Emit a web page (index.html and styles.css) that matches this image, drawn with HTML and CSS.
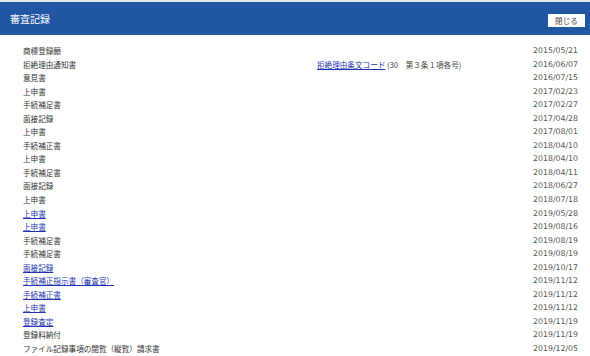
FILE: index.html
```html
<!DOCTYPE html>
<html lang="ja">
<head>
<meta charset="utf-8">
<title>審査記録</title>
<link rel="stylesheet" href="styles.css">
</head>
<body>
<div class="page">
  <header class="bar">
    <h1 class="title">審査記録</h1>
    <button class="close">閉じる</button>
  </header>
  <div class="list">
    <div class="row"><span class="name">商標登録願</span><span class="extra"></span><span class="date">2015/05/21</span></div>
    <div class="row"><span class="name">拒絶理由通知書</span><span class="extra"><a href="#">拒絶理由条文コード</a>&nbsp;(30　第３条１項各号)</span><span class="date">2016/06/07</span></div>
    <div class="row"><span class="name">意見書</span><span class="extra"></span><span class="date">2016/07/15</span></div>
    <div class="row"><span class="name">上申書</span><span class="extra"></span><span class="date">2017/02/23</span></div>
    <div class="row"><span class="name">手続補足書</span><span class="extra"></span><span class="date">2017/02/27</span></div>
    <div class="row"><span class="name">面接記録</span><span class="extra"></span><span class="date">2017/04/28</span></div>
    <div class="row"><span class="name">上申書</span><span class="extra"></span><span class="date">2017/08/01</span></div>
    <div class="row"><span class="name">手続補正書</span><span class="extra"></span><span class="date">2018/04/10</span></div>
    <div class="row"><span class="name">上申書</span><span class="extra"></span><span class="date">2018/04/10</span></div>
    <div class="row"><span class="name">手続補足書</span><span class="extra"></span><span class="date">2018/04/11</span></div>
    <div class="row"><span class="name">面接記録</span><span class="extra"></span><span class="date">2018/06/27</span></div>
    <div class="row"><span class="name">上申書</span><span class="extra"></span><span class="date">2018/07/18</span></div>
    <div class="row"><span class="name"><a href="#">上申書</a></span><span class="extra"></span><span class="date">2019/05/28</span></div>
    <div class="row"><span class="name"><a href="#">上申書</a></span><span class="extra"></span><span class="date">2019/08/16</span></div>
    <div class="row"><span class="name">手続補足書</span><span class="extra"></span><span class="date">2019/08/19</span></div>
    <div class="row"><span class="name">手続補足書</span><span class="extra"></span><span class="date">2019/08/19</span></div>
    <div class="row"><span class="name"><a href="#">面接記録</a></span><span class="extra"></span><span class="date">2019/10/17</span></div>
    <div class="row"><span class="name"><a href="#">手続補正指示書（審査官）</a></span><span class="extra"></span><span class="date">2019/11/12</span></div>
    <div class="row"><span class="name"><a href="#">手続補正書</a></span><span class="extra"></span><span class="date">2019/11/12</span></div>
    <div class="row"><span class="name"><a href="#">上申書</a></span><span class="extra"></span><span class="date">2019/11/12</span></div>
    <div class="row"><span class="name"><a href="#">登録査定</a></span><span class="extra"></span><span class="date">2019/11/19</span></div>
    <div class="row"><span class="name">登録料納付</span><span class="extra"></span><span class="date">2019/11/19</span></div>
    <div class="row"><span class="name">ファイル記録事項の閲覧（縦覧）請求書</span><span class="extra"></span><span class="date">2019/12/05</span></div>
  </div>
</div>
</body>
</html>
```
FILE: styles.css
```css
html, body {
  margin: 0;
  padding: 0;
  background: #ffffff;
}
body {
  font-family: "Noto Sans CJK JP", "DejaVu Sans", sans-serif;
  color: #333333;
}
.page {
  border-top: 2px solid #e6eaf0;
}
.bar {
  height: 33px;
  background: #2156a5;
  display: flex;
  align-items: center;
  justify-content: space-between;
  padding: 0 5px 0 10px;
  box-sizing: border-box;
}
.title {
  margin: 0;
  font-size: 10px;
  font-weight: normal;
  color: #ffffff;
  line-height: 1;
}
.close {
  width: 37px;
  height: 13px;
  margin-top: 3px;
  padding: 0;
  border: none;
  background: #ffffff;
  color: #444;
  font-family: "Noto Sans CJK JP", sans-serif;
  font-size: 7.6px;
  line-height: 13px;
}
.list {
  padding: 9px 12px 0 23px;
}
.row {
  display: grid;
  grid-template-columns: 294px 1fr auto;
  height: 13.55px;
  align-items: center;
  font-size: 7.6px;
  line-height: 13.55px;
}
.name, .extra {
  white-space: nowrap;
}
.extra {
  color: #444;
}
.date {
  font-family: "DejaVu Sans", sans-serif;
  font-size: 7.8px;
  color: #555555;
}
a {
  color: #2233b0;
  text-decoration: underline;
}
```
